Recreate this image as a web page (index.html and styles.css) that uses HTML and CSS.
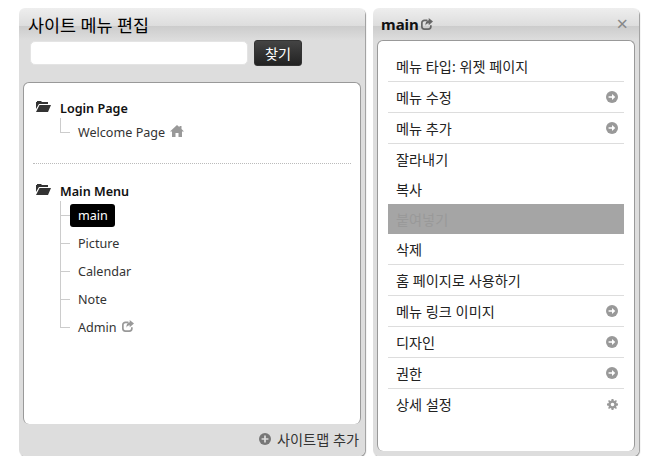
FILE: index.html
```html
<!DOCTYPE html>
<html lang="ko">
<head>
  <meta charset="UTF-8">
  <title>사이트 메뉴 편집</title>
  <link rel="stylesheet" href="styles.css">
</head>
<body>
  <svg class="icon-defs" width="0" height="0">
    <symbol id="i-arrow" viewBox="0 0 14 14">
      <circle cx="7" cy="7" r="7" fill="currentColor"/>
      <path d="M3 6h4V3.600L10.800 7 7 10.400V8H3z" fill="#fff"/>
    </symbol>
    <symbol id="i-share" viewBox="0 0 14 14">
      <path d="M7.500 2.800H4A3 3 0 0 0 1 5.800v4.200a3 3 0 0 0 3 3h4.500a3 3 0 0 0 3-3V8.500" fill="none" stroke="currentColor" stroke-width="2"/>
      <path d="M9 0 14 4.200 9 8.400V6C7 6 5.800 7 5.300 9 4.800 5.500 6.300 2.900 9 2.700z" fill="currentColor"/>
    </symbol>
  </svg>

  <div class="page">
    <section class="panel panel-left">
      <h1 class="panel-title">사이트 메뉴 편집</h1>
      <form class="search">
        <input class="search-input" type="text">
        <button class="search-btn" type="button">찾기</button>
      </form>

      <div class="sheet tree-sheet">
        <div class="site">
          <h2 class="site-name">
            <svg class="folder" viewBox="0 0 15 11"><path d="M0 2V1h1V0h4l1 1h6v2H3L0 8z M3.500 4H15l-3 7H0z" fill="#333"/></svg>
            Login Page
          </h2>
          <ul class="tree">
            <li class="tree-item">
              <a class="tree-link">Welcome Page</a>
              <svg class="home" viewBox="0 0 14 12"><path d="M7 0l2.500 2.300V1h2v3.100L14 6.500h-2V12H8.500V8h-3v4H2V6.500H0z" fill="#999"/></svg>
            </li>
          </ul>
        </div>
        <div class="site site-main">
          <h2 class="site-name">
            <svg class="folder" viewBox="0 0 15 11"><path d="M0 2V1h1V0h4l1 1h6v2H3L0 8z M3.500 4H15l-3 7H0z" fill="#333"/></svg>
            Main Menu
          </h2>
          <ul class="tree">
            <li class="tree-item"><a class="tree-link is-active">main</a></li>
            <li class="tree-item"><a class="tree-link">Picture</a></li>
            <li class="tree-item"><a class="tree-link">Calendar</a></li>
            <li class="tree-item"><a class="tree-link">Note</a></li>
            <li class="tree-item">
              <a class="tree-link">Admin</a>
              <svg class="share"><use href="#i-share"/></svg>
            </li>
          </ul>
        </div>
      </div>

      <div class="panel-foot">
        <svg class="plus" viewBox="0 0 14 14">
          <circle cx="7" cy="7" r="7" fill="#777"/>
          <path d="M6 3h2v3h3v2H8v3H6V8H3V6h3z" fill="#ddd"/>
        </svg>
        <span>사이트맵 추가</span>
      </div>
    </section>

    <section class="panel panel-right">
      <header class="right-head">
        <h2 class="right-title">main</h2>
        <svg class="share share-title"><use href="#i-share"/></svg>
        <span class="close">×</span>
      </header>
      <div class="sheet menu-sheet">
        <ul class="menu">
          <li class="menu-row">메뉴 타입: 위젯 페이지</li>
          <li class="menu-row">메뉴 수정 <svg class="arrow"><use href="#i-arrow"/></svg></li>
          <li class="menu-row">메뉴 추가 <svg class="arrow"><use href="#i-arrow"/></svg></li>
          <li class="menu-row no-line">잘라내기</li>
          <li class="menu-row no-line">복사</li>
          <li class="menu-row no-line is-disabled">붙여넣기</li>
          <li class="menu-row">삭제</li>
          <li class="menu-row">홈 페이지로 사용하기</li>
          <li class="menu-row">메뉴 링크 이미지 <svg class="arrow"><use href="#i-arrow"/></svg></li>
          <li class="menu-row">디자인 <svg class="arrow"><use href="#i-arrow"/></svg></li>
          <li class="menu-row">권한 <svg class="arrow"><use href="#i-arrow"/></svg></li>
          <li class="menu-row no-line">상세 설정
            <svg class="cog" viewBox="0 0 12 12">
              <path d="M5 0h2l.3 1.600 1.100.5L9.800 1.200l1 1-.9 1.400.5 1.100L12 5v2l-1.600.3-.5 1.100.9 1.400-1 1-1.400-.9-1.100.5L7 12H5l-.3-1.600-1.100-.5-1.400.9-1-1 .9-1.400-.5-1.100L0 7V5l1.600-.3.5-1.100-.9-1.400 1-1 1.400.9 1.100-.5z M6 4a2 2 0 1 0 0 4 2 2 0 0 0 0-4z" fill="#999" fill-rule="evenodd"/>
            </svg>
          </li>
        </ul>
      </div>
    </section>
  </div>
</body>
</html>
```

FILE: styles.css
```css
/* General */
body {
  margin: 0;
  background: #fff;
  color: #222;
  font-family: "Noto Sans", "Noto Sans CJK KR", sans-serif;
  font-size: 14.2px;
}

.icon-defs {
  display: block;
}

.page {
  display: flex;
  gap: 8px;
  width: 620px;
  height: 448px;
  margin: 8px 0 0 19px;
}

/* Panels */
.panel {
  display: flex;
  flex-direction: column;
  box-sizing: border-box;
  height: 100%;
  background: linear-gradient(#eee, #ddd 18px, #ccc 18px, #ddd 32px);
  border-radius: 6px;
  box-shadow: 1px 1px 1px #999;
}

.panel-left {
  width: 346px;
}

.panel-right {
  width: 266px;
}

.panel-title {
  margin: 0;
  padding: 7px 0 0 9px;
  height: 25px;
  color: #000;
  font-size: 17.4px;
  font-weight: 400;
  line-height: 21px;
}

.sheet {
  background: #fff;
  border: 1px solid #999;
  border-bottom: 0;
  border-radius: 6px;
  box-sizing: border-box;
}

/* Search */
.search {
  display: flex;
  align-items: center;
  gap: 6px;
  height: 26px;
  margin: 0 0 16px 11px;
}

.search-input {
  box-sizing: border-box;
  width: 218px;
  height: 24px;
  border: 1px solid #e4e4e4;
  border-radius: 5px;
  background: #fff;
}

.search-btn {
  width: 48px;
  height: 26px;
  padding: 0;
  background: linear-gradient(#444, #222);
  border: 1px solid #333;
  border-radius: 3px;
  color: #fff;
  font-family: inherit;
  font-size: 14.2px;
}

/* Tree */
.tree-sheet {
  width: 338px;
  height: 342px;
  margin-left: 4px;
  padding: 15px 9px 0;
  font-size: 12.6px;
}

.site {
  height: 65px;
  border-bottom: 1px dotted #bbb;
}

.site-main {
  height: auto;
  margin-top: 17px;
  border-bottom: 0;
}

.site-name {
  display: flex;
  align-items: center;
  gap: 9px;
  height: 20px;
  margin: 0 0 0 3px;
  color: #111;
  font-size: 12.6px;
  font-weight: 600;
}

.folder {
  width: 15px;
  height: 11px;
  margin-top: -4px;
}

.tree {
  margin: 0 0 0 27px;
  padding: 0;
  list-style: none;
}

.tree-item {
  display: flex;
  align-items: center;
  gap: 5px;
  height: 28px;
  padding-left: 18px;
  background:
    linear-gradient(#ccc, #ccc) 0 0 / 1px 100% no-repeat,
    linear-gradient(#ccc, #ccc) 0 50% / 10px 1px no-repeat;
}

.tree-item:last-child {
  background:
    linear-gradient(#ccc, #ccc) 0 0 / 1px 50% no-repeat,
    linear-gradient(#ccc, #ccc) 0 50% / 10px 1px no-repeat;
}

.tree-link {
  color: #333;
}

.is-active {
  display: flex;
  align-items: center;
  box-sizing: border-box;
  width: 45px;
  height: 23px;
  margin-left: -8px;
  padding: 0 8px;
  background: #000;
  border-radius: 3px;
  color: #fff;
}

.home {
  width: 14px;
  height: 12px;
  margin-top: -3px;
}

.share {
  width: 12px;
  height: 12px;
  margin-top: -2px;
  color: #999;
}

/* Footer */
.panel-foot {
  display: flex;
  align-items: center;
  justify-content: flex-end;
  gap: 6px;
  padding: 5px 6px 0 0;
  color: #333;
}

.plus {
  width: 12px;
  height: 12px;
  margin-top: -1px;
}

/* Right panel */
.right-head {
  display: flex;
  align-items: center;
  gap: 2px;
  height: 32px;
  padding: 0 11px 0 8px;
  box-sizing: border-box;
}

.right-title {
  margin: 0;
  color: #111;
  font-size: 15px;
  font-weight: 700;
}

.share-title {
  color: #666;
  margin-top: 0;
}

.close {
  margin-left: auto;
  color: #888;
  font-size: 20px;
  line-height: 20px;
}

.menu-sheet {
  width: 258px;
  height: 411px;
  margin-left: 4px;
  padding: 10px 10px 0;
}

.menu {
  margin: 0;
  padding: 0;
  list-style: none;
}

.menu-row {
  display: flex;
  align-items: center;
  justify-content: space-between;
  box-sizing: border-box;
  height: 31px;
  padding: 0 8px;
  border-bottom: 1px solid #ddd;
  color: #222;
}

.no-line {
  height: 30px;
  border-bottom: 0;
}

.is-disabled {
  background: #a5a5a5;
  color: #999;
}

.arrow {
  width: 12px;
  height: 12px;
  margin-right: -2px;
  color: #999;
}

.cog {
  width: 11px;
  height: 11px;
  margin-right: -2px;
}
```
